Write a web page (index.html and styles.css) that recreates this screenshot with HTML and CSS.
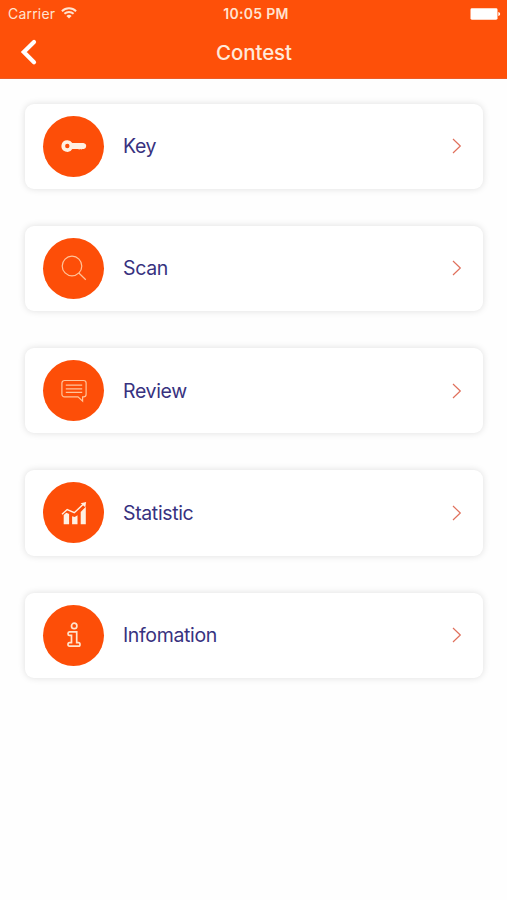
FILE: index.html
```html
<!DOCTYPE html>
<html lang="en">
<head>
<meta charset="utf-8">
<title>Contest</title>
<link rel="stylesheet" href="styles.css">
</head>
<body>
<header class="header">
  <div class="status">
    <div class="carrier"><span class="carrier-name">Carrier</span>
      <svg class="wifi" width="16" height="12" viewBox="0 0 16 12" fill="none" stroke="currentColor" stroke-width="1.9"><path d="M.9 4.2a10.2 10.2 0 0 1 14.2 0M3.4 6.8a6.6 6.6 0 0 1 9.2 0"/><path d="M5.4 8.9a3.8 3.8 0 0 1 5.2 0L8 11.5z" fill="currentColor" stroke="none"/></svg>
    </div>
    <span class="time">10:05 PM</span>
    <svg class="battery" width="31" height="12" viewBox="0 0 31 12" fill="currentColor"><rect x=".5" y=".3" width="27" height="11.4" rx="1.4"/><path d="M28.3 4c2.4.6 2.4 3.4 0 4z"/></svg>
  </div>
  <nav class="navbar">
    <svg class="back" width="18" height="28" viewBox="0 0 18 28" fill="none" stroke="currentColor" stroke-width="4.2" stroke-linecap="round"><path d="M14 4 3.8 14 14 24.2"/></svg>
    <h1 class="title">Contest</h1>
  </nav>
</header>
<main class="menu">
  <a class="card">
    <span class="badge"><svg class="icon" viewBox="0 0 28 28" fill="currentColor"><path fill-rule="evenodd" d="M7.3 8.3a5.7 5.7 0 0 1 5 2.6h11.1q2.8.5 2.8 3t-2.3 3h-1.6l-1 .6-1.1-.6-1 .6-1.2-.6h-5.7A5.8 5.8 0 1 1 7.3 8.3zm0 3.5a2.2 2.2 0 1 0 0 4.4 2.2 2.2 0 0 0 0-4.4z"/></svg></span>
    <span class="label">Key</span>
    <svg class="chevron" viewBox="0 0 10 16"><path d="M1 1l7.3 7L1 15"/></svg>
  </a>
  <a class="card">
    <span class="badge"><svg class="icon thin" viewBox="0 0 28 28"><circle cx="12" cy="12" r="9.8"/><path d="m18.8 19 7 6.8"/></svg></span>
    <span class="label">Scan</span>
    <svg class="chevron" viewBox="0 0 10 16"><path d="M1 1l7.3 7L1 15"/></svg>
  </a>
  <a class="card">
    <span class="badge"><svg class="icon thin" viewBox="0 0 28 28"><path d="M4.5 3.5h19a2.6 2.6 0 0 1 2.6 2.6v11.2a2.6 2.6 0 0 1-2.6 2.6h-.9v4.3l-4.6-4.3H4.5a2.6 2.6 0 0 1-2.6-2.6V6.1a2.6 2.6 0 0 1 2.6-2.6zM5.8 8.2h16.4M5.8 11.8h16.4M5.8 15.4h16.4"/></svg></span>
    <span class="label">Review</span>
    <svg class="chevron" viewBox="0 0 10 16"><path d="M1 1l7.3 7L1 15"/></svg>
  </a>
  <a class="card">
    <span class="badge"><svg class="icon" viewBox="0 0 28 28" fill="currentColor"><path d="M3.7 16 6.3 13.7l2.8 1.2v10.3H3.7zM12.1 17.2l2.6.8 2.8-1.8v9H12.1zM20.7 13l5.1-5.3v17.500h-5.1z"/><path d="m2 15.2 5.2-4.7 7.1 3.2 8.7-8.1" fill="none" stroke="currentColor" stroke-width="1.4"/><path d="m20.7 4.2 5.4-1.3-.8 5.4z"/></svg></span>
    <span class="label">Statistic</span>
    <svg class="chevron" viewBox="0 0 10 16"><path d="M1 1l7.3 7L1 15"/></svg>
  </a>
  <a class="card">
    <span class="badge"><svg class="icon info" viewBox="0 0 28 28"><circle cx="14.2" cy="4.9" r="2.7"/><path d="M9.5 10.9h7.2v10.7h1.8q1.5 0 1.5 1.8t-1.5 1.8H9.5Q8 25.2 8 23.4t1.5-1.8h2v-7.2h-2q-1.5 0-1.5-1.7t1.5-1.8z"/></svg></span>
    <span class="label">Infomation</span>
    <svg class="chevron" viewBox="0 0 10 16"><path d="M1 1l7.3 7L1 15"/></svg>
  </a>
</main>
</body>
</html>
```
FILE: styles.css
```css
* { box-sizing: border-box; }
body {
  margin: 0;
  min-height: 900px;
  background: #fefefe;
  font-family: Inter, "Liberation Sans", sans-serif;
}
.header {
  height: 79px;
  background: #fe5009;
  border-bottom: 1px solid #ec5c28;
  color: #fff;
}
.status {
  display: grid;
  grid-template-columns: 1fr auto 1fr;
  align-items: center;
  height: 27px;
  padding: 0 6px 0 8px;
  font-size: 14px;
  color: #ffe3d0;
}
.carrier { display: flex; align-items: center; gap: 6px; }
.carrier-name { letter-spacing: .2px; }
.wifi { margin-top: -2px; }
.time { font-weight: 600; letter-spacing: .3px; margin-left: 3px; }
.battery { justify-self: end; color: #fff; }
.navbar {
  display: grid;
  grid-template-columns: 60px 1fr 60px;
  align-items: center;
  height: 50px;
}
.back { margin-left: 19.5px; }
.title {
  margin: 2px 0 0 1px;
  text-align: center;
  font-size: 20.5px;
  font-weight: 450;
  letter-spacing: -.1px;
  line-height: 24px;
  color: #ffe9da;
}
.menu {
  display: flex;
  flex-direction: column;
  gap: 37px;
  padding: 24.5px 24px 0 25px;
}
.card {
  display: flex;
  align-items: center;
  height: 85.25px;
  padding: 0 21px 0 18.4px;
  border-radius: 9px;
  background: #fff;
  box-shadow: 0 0 7px rgba(0, 0, 0, .13);
}
.badge {
  display: grid;
  place-items: center;
  width: 61px;
  height: 61px;
  border-radius: 50%;
  background: #fd4e08;
  color: #fff0e2;
}
.icon { width: 28px; height: 28px; }
.thin { fill: none; stroke: #ffc49a; stroke-width: 1.2; }
.info { fill: none; stroke: #ffe3cc; stroke-width: 1.7; }
.label {
  flex: 1;
  margin-left: 18.6px;
  font-size: 19.5px;
  letter-spacing: -.35px;
  line-height: 24px;
  color: #38327f;
}
.chevron {
  width: 10px;
  height: 16px;
  fill: none;
  stroke: #e0705c;
  stroke-width: 1.2;
}
```
